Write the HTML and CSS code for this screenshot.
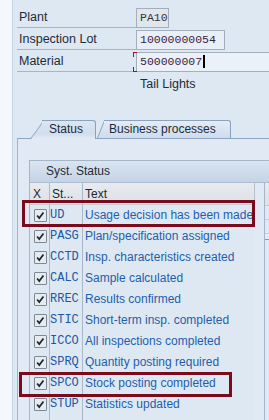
FILE: index.html
```html
<!DOCTYPE html>
<html>
  <head>
    <title>Inspection Lot Status</title>
    <link rel="stylesheet" href="styles.css">
  </head>
  <body>
    <div class="screen">
      <div class="gutter"></div>
      <div class="main">

        <div class="form">
          <div class="field-row">
            <span class="field-label">Plant</span>
            <span class="field field-ro w-plant">PA10</span>
          </div>
          <div class="field-row">
            <span class="field-label">Inspection Lot</span>
            <span class="field w-lot">10000000054</span>
          </div>
          <div class="field-row">
            <span class="field-label">Material</span>
            <span class="field field-req w-mat">500000007<span class="caret"></span></span>
          </div>
          <div class="field-desc">Tail Lights</div>
        </div>

        <div class="tabs">
          <div class="tab tab-active"><span class="tab-text">Status</span></div>
          <div class="tab tab-b"><span class="tab-text">Business processes</span></div>
        </div>

        <div class="panel">
          <div class="st-table">
            <div class="st-head">Syst. Status</div>
            <div class="st-body">
              <div class="st-grid">
                <div class="col-head">
                  <div class="c-x">X</div>
                  <div class="c-st">St...</div>
                  <div class="c-text">Text</div>
                </div>
                <div id="rows"></div>
                <div class="mark mark-ud"></div>
                <div class="mark mark-spco"></div>
              </div>
              <div class="us-table">
                <div class="us-head"></div>
                <div class="us-line"></div>
                <div class="us-line"></div>
                <div class="us-box"></div>
              </div>
            </div>
          </div>
        </div>

      </div>
    </div>

    <script>
    const statuses = [
        ['UD', 'Usage decision has been made'],
        ['PASG', 'Plan/specification assigned'],
        ['CCTD', 'Insp. characteristics created'],
        ['CALC', 'Sample calculated'],
        ['RREC', 'Results confirmed'],
        ['STIC', 'Short-term insp. completed'],
        ['ICCO', 'All inspections completed'],
        ['SPRQ', 'Quantity posting required'],
        ['SPCO', 'Stock posting completed'],
        ['STUP', 'Statistics updated']
    ];

    const check = '<svg class="tick" viewBox="0 0 13 13" width="11" height="11">' +
        '<path d="M2.5 6.5 L5 9.5 L10 3" fill="none" stroke="#1c2530" stroke-width="2"/></svg>';

    let html = '';
    for (let s of statuses) {
        html += '<div class="row">' +
            '<div class="c-x"><span class="cb">' + check + '</span></div>' +
            '<div class="c-st code">' + s[0] + '</div>' +
            '<div class="c-text">' + s[1] + '</div>' +
            '</div>';
    }
    // empty row to fill to the bottom
    html += '<div class="row"><div class="c-x"></div><div class="c-st"></div><div class="c-text"></div></div>';
    document.getElementById('rows').innerHTML = html;
    </script>
  </body>
</html>
```

FILE: styles.css
```css
  body {
    margin: 0;
    font-family: "Liberation Sans", Arial, sans-serif;
    font-size: 12px;
    color: #1f2b38;
    overflow: hidden;
  }
  .screen {
    display: flex;
    width: 269px;
    height: 420px;
    background-color: #dde8f3;
    overflow: hidden;
  }
  .gutter {
    width: 12px;
    flex: none;
    background-color: #f4f7fb;
    border-right: 1px solid #c6d3e1;
  }
  .main {
    flex: 1;
    min-width: 0;
  }

  /* header fields */
  .form {
    display: flex;
    flex-direction: column;
    gap: 2px;
    padding-top: 8px;
  }
  .field-row {
    display: flex;
    height: 20px;
  }
  .field-label {
    flex: none;
    width: 119px;
    margin-left: 4px;
    padding-left: 2px;
    box-sizing: border-box;
    border-bottom: 1px solid #a9b5c2;
    font-size: 12.5px;
    line-height: 19px;
  }
  .field {
    position: relative;
    box-sizing: border-box;
    height: 20px;
    flex: none;
    border: 1px solid #a3afbc;
    background-color: #e8eff7;
    padding-left: 3px;
    font-family: "Liberation Mono", "Courier New", monospace;
    font-size: 11.5px;
    line-height: 18px;
    color: #3b2142;
    white-space: nowrap;
  }
  .field-ro {
    background-color: #dfe6ee;
    color: #3a3038;
  }
  .w-plant { width: 33px; }
  .w-lot { width: 89px; }
  .w-mat { width: 150px; background-color: #eaf1f9; }
  .field-req::before,
  .field-req::after {
    content: '';
    position: absolute;
    left: -4px;
    width: 3px;
    height: 4px;
    border-left: 1px solid #a3141e;
  }
  .field-req::before {
    top: -1px;
    border-top: 1px solid #a3141e;
  }
  .field-req::after {
    bottom: -1px;
    border-bottom: 1px solid #a3141e;
  }
  .caret {
    display: inline-block;
    width: 2px;
    height: 13px;
    margin-left: 1px;
    background-color: #000;
    vertical-align: -3px;
  }
  .field-desc {
    margin-left: 127px;
    height: 20px;
    font-size: 12.5px;
    line-height: 20px;
  }

  /* tab strip */
  .tabs {
    display: flex;
    align-items: flex-end;
    margin-top: 26px;
    margin-left: 17px;
    height: 18px;
    position: relative;
    z-index: 1;
  }
  .tab {
    position: relative;
    height: 18px;
    box-sizing: border-box;
    font-size: 12px;
    line-height: 18px;
    color: #1d2a38;
  }
  .tab::before {
    content: '';
    position: absolute;
    left: 0;
    top: 0;
    bottom: 0;
    width: 24px;
    border-top: 1px solid #8aa2c0;
    border-left: 1px solid #8aa2c0;
    background: linear-gradient(#e3ecf6, #cfdcec);
    transform: skewX(-36deg);
    transform-origin: bottom left;
  }
  .tab::after {
    content: '';
    position: absolute;
    left: 12px;
    right: 0;
    top: 0;
    bottom: 0;
    border-top: 1px solid #8aa2c0;
    border-right: 1px solid #8aa2c0;
    border-radius: 0 3px 0 0;
    background: linear-gradient(#e3ecf6, #cfdcec);
  }
  .tab-text {
    position: relative;
    z-index: 1;
  }
  .tab-active {
    height: 19px;
    margin-bottom: -1px;
    padding: 0 13px 0 19px;
    line-height: 19px;
    z-index: 2;
  }
  .tab-active::before,
  .tab-active::after {
    background: linear-gradient(#dbe6f2, #d0dded 70%, #e2ebf5);
  }
  .tab-b {
    margin-left: 1px;
    padding: 0 15px 0 12px;
  }
  .tab-b::before {
    transform: skewX(-22deg);
  }
  .tab-b::after {
    left: 7px;
  }

  /* status panel */
  .panel {
    margin-left: 4px;
    border-top: 1px solid #8ea6c4;
    border-left: 1px solid #9fb3cb;
    background-color: #e1eaf4;
    padding: 21px 0 0 11px;
    height: 300px;
  }
  .st-table {
    border: 1px solid #a6b6c7;
    border-right: none;
    height: 280px;
  }
  .st-head {
    height: 21px;
    line-height: 21px;
    padding-left: 16px;
    background: linear-gradient(#dae5f1, #c4d3e5);
    border-bottom: 1px solid #aebdcd;
    color: #1e2c3b;
  }
  .st-body {
    display: flex;
  }
  .st-grid {
    position: relative;
    width: 225px;
    flex: none;
    background-color: #dee8f3;
  }
  .col-head,
  .row {
    display: flex;
    align-items: stretch;
  }
  .col-head {
    height: 22px;
    line-height: 22px;
    background: linear-gradient(#e7eaee, #dde2e7);
    border-bottom: 1px solid #c3cad2;
    border-right: 1px solid #b4bec8;
    box-sizing: border-box;
    color: #1d2732;
  }
  .row {
    height: 21px;
    line-height: 21px;
  }
  .c-x {
    width: 20px;
    flex: none;
    box-sizing: border-box;
    border-right: 1px solid #aab9c9;
    padding-left: 3px;
  }
  .c-st {
    width: 33px;
    flex: none;
    box-sizing: border-box;
    border-right: 1px solid #aab9c9;
    padding-left: 2px;
    white-space: nowrap;
    overflow: hidden;
  }
  .c-text {
    flex: 1;
    padding-left: 2px;
    white-space: nowrap;
  }
  .row .c-text {
    color: #1f5eab;
  }
  .code {
    font-family: "Liberation Mono", "Courier New", monospace;
    font-size: 12px;
    color: #2057a3;
    padding-left: 0;
  }
  .cb {
    display: inline-flex;
    align-items: center;
    justify-content: center;
    width: 13px;
    height: 13px;
    box-sizing: border-box;
    margin-top: 4px;
    margin-left: 1px;
    border: 1px solid #7e8995;
    border-radius: 1px;
    background-color: #e6ebf0;
    vertical-align: top;
  }
  .mark {
    position: absolute;
    box-sizing: border-box;
    border: 3px solid #7b0b1c;
  }
  .mark-ud {
    left: -8px;
    top: 17px;
    width: 233px;
    height: 27px;
  }
  .mark-spco {
    left: -11px;
    top: 189px;
    width: 213px;
    height: 25px;
  }

  /* user status table, cut off at the right */
  .us-table {
    flex: 1;
    margin-left: 9px;
    border-left: 1px solid #a6b6c7;
  }
  .us-head {
    height: 22px;
    background: linear-gradient(#e7eaee, #dde2e7);
    border-bottom: 1px solid #c3cad2;
  }
  .us-line {
    height: 13px;
    border-bottom: 1px solid #c6d0da;
  }
  .us-box {
    margin-top: 5px;
    height: 8px;
    border-top: 1px solid #8b96a2;
  }
```
